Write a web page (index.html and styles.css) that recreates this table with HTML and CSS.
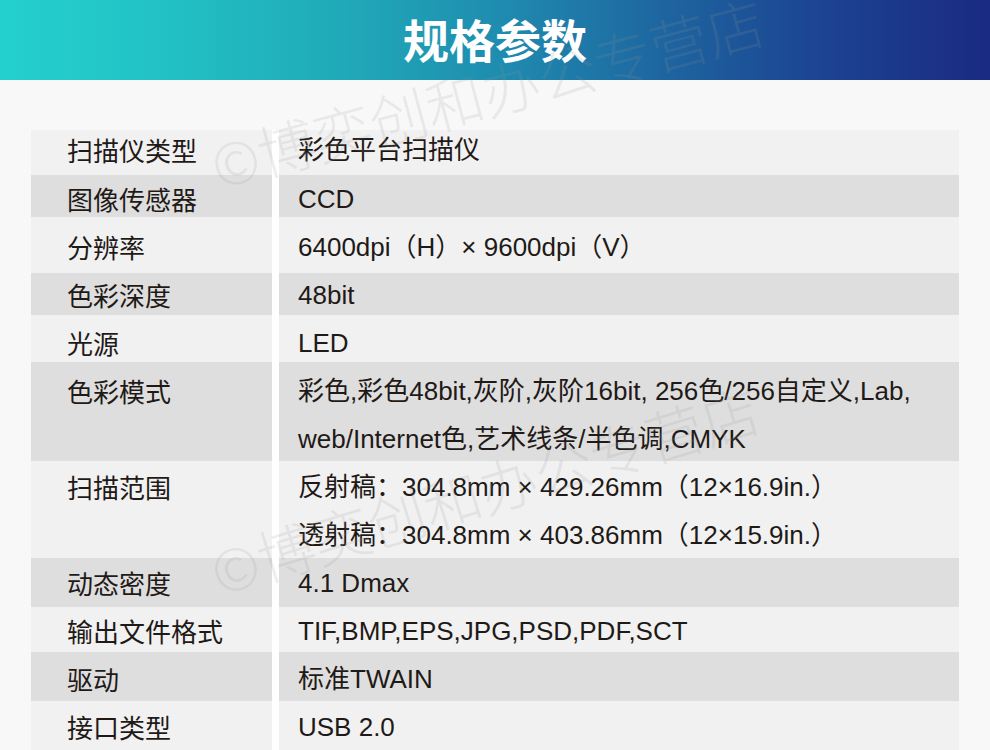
FILE: index.html
```html
<!DOCTYPE html>
<html lang="zh-CN">
<head>
<meta charset="utf-8">
<title>规格参数</title>
<link rel="stylesheet" href="styles.css">
</head>
<body>
<header class="banner">
  <h1 class="banner-title">规格参数</h1>
</header>
<main class="specs">
  <div class="spec-table">
    <div class="row"><div class="key">扫描仪类型</div><div class="val">彩色平台扫描仪</div></div>
    <div class="row"><div class="key">图像传感器</div><div class="val">CCD</div></div>
    <div class="row"><div class="key">分辨率</div><div class="val">6400dpi（H）× 9600dpi（V）</div></div>
    <div class="row"><div class="key">色彩深度</div><div class="val">48bit</div></div>
    <div class="row"><div class="key">光源</div><div class="val">LED</div></div>
    <div class="row"><div class="key">色彩模式</div><div class="val"><span class="line">彩色,彩色48bit,灰阶,灰阶16bit, 256色/256自定义,Lab,</span><span class="line">web/Internet色,艺术线条/半色调,CMYK</span></div></div>
    <div class="row"><div class="key">扫描范围</div><div class="val"><span class="line">反射稿：304.8mm × 429.26mm（12×16.9in.）</span><span class="line">透射稿：304.8mm × 403.86mm（12×15.9in.）</span></div></div>
    <div class="row"><div class="key">动态密度</div><div class="val">4.1 Dmax</div></div>
    <div class="row"><div class="key">输出文件格式</div><div class="val">TIF,BMP,EPS,JPG,PSD,PDF,SCT</div></div>
    <div class="row"><div class="key">驱动</div><div class="val">标准TWAIN</div></div>
    <div class="row"><div class="key">接口类型</div><div class="val">USB 2.0</div></div>
  </div>
</main>
<div class="watermark wm-top" aria-hidden="true">©博奕创和办公专营店</div>
<div class="watermark wm-bottom" aria-hidden="true">©博奕创和办公专营店</div>
</body>
</html>
```
FILE: styles.css
```css
html, body {
  margin: 0;
  padding: 0;
}
body {
  background: #f8f8f8;
  font-family: "Liberation Sans", "Noto Sans CJK SC", sans-serif;
  color: #1f1a17;
  width: 990px;
  height: 750px;
  overflow: hidden;
  position: relative;
}
.banner {
  height: 80px;
  background: linear-gradient(90deg, #24d0cd 0%, #22c3c6 15%, #20a9b8 35%, #1f8db0 50%, #1e6aa2 65%, #1c4592 82%, #1a2a82 100%);
  display: flex;
  align-items: center;
  justify-content: center;
}
.banner-title {
  margin: 0;
  font-family: "Noto Sans CJK SC", sans-serif;
  font-weight: 700;
  font-size: 46px;
  line-height: 1;
  color: #ffffff;
  letter-spacing: 0;
  transform: translateY(-2px);
}
.specs {
  padding: 50px 31px 0 31px;
}
.spec-table {
  background: #ffffff;
  display: flex;
  flex-direction: column;
}
.row {
  display: grid;
  grid-template-columns: 241px 680px;
  column-gap: 7px;
}
.key, .val {
  font-size: 26px;
  line-height: 36px;
  background: #f1f1f1;
  white-space: nowrap;
}
.key {
  padding-left: 36px;
  font-family: "Noto Sans CJK SC", sans-serif;
}
.val {
  padding-left: 19px;
}
.row:nth-child(even) .key,
.row:nth-child(even) .val {
  background: #dedede;
}
.line {
  display: block;
}
.line + .line {
  margin-top: 12px;
}
.row:nth-child(1) > div { padding-top: 2px; padding-bottom: 7px; }
.row:nth-child(2) > div { padding-top: 6px; padding-bottom: 0; }
.row:nth-child(3) > div { padding-top: 12px; padding-bottom: 8px; }
.row:nth-child(4) > div { padding-top: 4px; padding-bottom: 2px; }
.row:nth-child(5) > div { padding-top: 10px; padding-bottom: 1px; }
.row:nth-child(6) > div { padding-top: 11px; padding-bottom: 4px; }
.row:nth-child(7) > div { padding-top: 8px; padding-bottom: 5px; }
.row:nth-child(8) > div { padding-top: 7px; padding-bottom: 6px; }
.row:nth-child(9) > div { padding-top: 6px; padding-bottom: 3px; }
.row:nth-child(10) > div { padding-top: 9px; padding-bottom: 4px; }
.row:nth-child(11) > div { padding-top: 8px; padding-bottom: 12px; }

.watermark {
  position: absolute;
  left: 212px;
  font-family: "Noto Sans CJK SC", sans-serif;
  font-weight: 300;
  font-size: 58px;
  line-height: 58px;
  white-space: nowrap;
  color: rgba(150, 150, 150, 0.16);
  transform-origin: left center;
  transform: rotate(-15deg);
  pointer-events: none;
}
.wm-top {
  top: 136px;
}
.wm-bottom {
  top: 543px;
  transform: rotate(-17deg);
}
```
